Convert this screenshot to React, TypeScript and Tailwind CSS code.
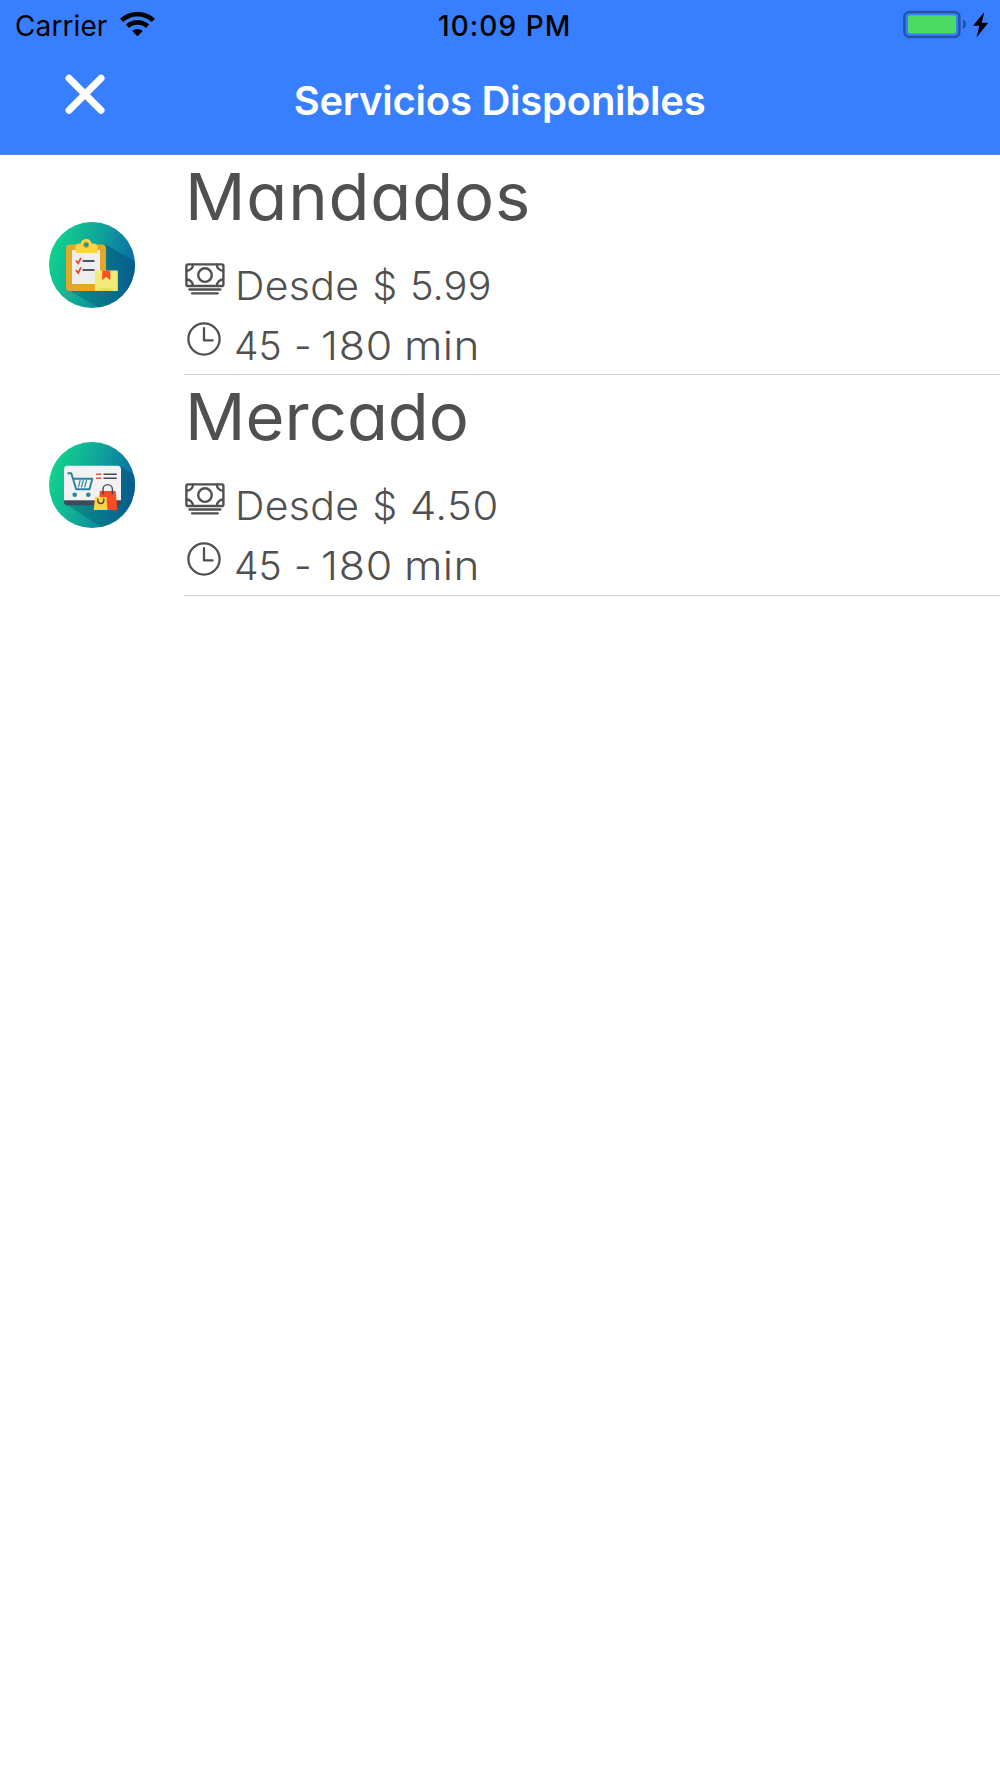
import type { ReactNode } from "react";

type Word = { text: string; className: string };
type Service = {
  name: string;
  nameClass: string;
  price: Word;
  icon: ReactNode;
};

function WifiIcon() {
  return (
    <svg className="ml-[13px] mt-[12px] h-[25px] w-[35px] shrink-0" viewBox="0 0 35 25">
      <path d="M1.6 8.6A23.5 23.5 0 0 1 33.4 8.6" fill="none" stroke="#000" strokeWidth="4.6" transform="translate(0 -.2)" />
      <path d="M7.4 14.3A15 15 0 0 1 27.6 14.3" fill="none" stroke="#000" strokeWidth="4.6" />
      <path d="M12.2 19.1A7.6 7.6 0 0 1 22.8 19.1L18.2 23.8Q17.5 24.4 16.8 23.8Z" fill="#000" />
    </svg>
  );
}

function BatteryIcon() {
  return (
    <svg className="h-[30px] w-[88px]" viewBox="0 0 88 30">
      <rect x="1.4" y="2" width="55" height="25" rx="5" fill="none" stroke="#2352a8" strokeWidth="2.4" />
      <rect x="5" y="5.2" width="48" height="18.2" rx="2.6" fill="#4cd964" />
      <path d="M60 9.6c4 1.6 4 8 0 9.6z" fill="#2352a8" />
      <path d="M81.4 2L70 15.8h6.4L73.6 27.4 85.2 12.8h-6.5z" fill="#000" />
    </svg>
  );
}

function CloseIcon() {
  return (
    <svg className="h-[40px] w-[40px]" viewBox="0 0 40 40">
      <path d="M4 4.2L36 36.2M36 4.2L4 36.2" stroke="#fff" strokeWidth="7" strokeLinecap="round" />
    </svg>
  );
}

function CashIcon() {
  return (
    <svg className="h-[32px] w-[40px]" viewBox="0 0 40 32" fill="none" stroke="#505050" strokeWidth="2" strokeLinecap="round" strokeLinejoin="round">
      <rect x="1.4" y="1.4" width="37" height="21.6" rx="1.6" strokeWidth="2.4" />
      <circle cx="20" cy="12.1" r="6.8" strokeWidth="2.4" />
      <path d="M8 1.6A6.4 6.4 0 0 1 1.6 7.8M31.8 1.6A6.4 6.4 0 0 0 38.2 7.8M8 22.8A6.4 6.4 0 0 0 1.6 16.5M31.8 22.8A6.4 6.4 0 0 1 38.2 16.5" strokeWidth="2.3" />
      <path d="M4.4 26.5H35.4M7 30.3H32.8" strokeWidth="2.3" />
    </svg>
  );
}

function ClockIcon() {
  return (
    <svg className="h-[34px] w-[34px]" viewBox="0 0 34 34" fill="none" stroke="#505050" strokeWidth="2.3">
      <circle cx="17" cy="17" r="15.6" />
      <path d="M17 6.2V18.4H25.6" strokeLinecap="round" strokeLinejoin="round" />
    </svg>
  );
}

function ErrandsIcon() {
  return (
    <svg className="h-[86px] w-[86px]" viewBox="0 0 86 86">
      <defs>
        <linearGradient id="errandsBase" x1="0" y1=".35" x2="1" y2=".65">
          <stop offset="0" stopColor="#10d58b" />
          <stop offset=".5" stopColor="#10a29a" />
          <stop offset="1" stopColor="#0865a7" />
        </linearGradient>
        <linearGradient id="errandsShade" x1="0" y1=".5" x2="1" y2=".5">
          <stop offset="0" stopColor="#0a9486" />
          <stop offset="1" stopColor="#07588e" />
        </linearGradient>
        <clipPath id="errandsClip"><circle cx="43" cy="43" r="43" /></clipPath>
      </defs>
      <g clipPath="url(#errandsClip)">
        <rect width="86" height="86" fill="url(#errandsBase)" />
        <path d="M17 67L54 88H90V42L56 22Z" fill="url(#errandsShade)" />
      </g>
      <rect x="17" y="22.5" width="40" height="46.5" rx="4" fill="#e2a829" />
      <path d="M23 28H51V62H23Z" fill="#eeeeef" />
      <path d="M26.5 31V25Q26.5 21.5 30 21.5H31.7A5.6 5.6 0 0 1 42.7 21.5H44.5Q48.5 21.5 48.5 25V31Z" fill="#ffd34a" />
      <circle cx="37.2" cy="22.7" r="2.6" fill="#12a18d" stroke="#d99d24" strokeWidth="1" />
      <path d="M27 38.5L29.2 41.3L32 35.8M27 48L29.2 51L32 45.3" fill="none" stroke="#ef4530" strokeWidth="1.8" />
      <path d="M33.6 39H45.5M33.6 48H45.5" stroke="#515366" strokeWidth="1.9" />
      <rect x="45.8" y="48.5" width="23" height="20.5" fill="#f1ea79" />
      <path d="M53.2 48.5H61.3V58.2L57.3 54.7L53.2 58.2Z" fill="#ff5023" />
      <path d="M46 68.6Q52 64.6 64 66.8V69H46Z" fill="#e8da68" />
    </svg>
  );
}

function MarketIcon() {
  return (
    <svg className="h-[86px] w-[86px]" viewBox="0 0 86 86">
      <defs>
        <linearGradient id="marketBase" x1="0" y1=".35" x2="1" y2=".65">
          <stop offset="0" stopColor="#10d58b" />
          <stop offset=".5" stopColor="#10a29a" />
          <stop offset="1" stopColor="#0865a7" />
        </linearGradient>
        <linearGradient id="marketShade" x1="0" y1=".5" x2="1" y2=".5">
          <stop offset="0" stopColor="#0a9486" />
          <stop offset="1" stopColor="#07588e" />
        </linearGradient>
        <clipPath id="marketClip"><circle cx="43" cy="43" r="43" /></clipPath>
        <clipPath id="marketCard"><rect x="15" y="23.5" width="57" height="40" rx="4" /></clipPath>
      </defs>
      <g clipPath="url(#marketClip)">
        <rect width="86" height="86" fill="url(#marketBase)" />
        <path d="M15 61L60 90H90V36L71.5 24Z" fill="url(#marketShade)" />
      </g>
      <g clipPath="url(#marketCard)">
        <rect x="15" y="23.5" width="57" height="35" fill="#f2f2f3" />
        <rect x="15" y="58.5" width="57" height="5" fill="#44465a" />
      </g>
      <path d="M18.5 31.2H22.3L27.2 47.2H40.5L43.3 36.7H24.2" fill="none" stroke="#2b829f" strokeWidth="1.9" strokeLinejoin="round" />
      <path d="M31.2 38.2L29.4 45.4M34.4 38.2L32.4 45.4M37.6 38.2L35.6 45.4" stroke="#2b829f" strokeWidth="1.2" />
      <circle cx="25.7" cy="52.8" r="2.3" fill="#2b829f" />
      <circle cx="39.3" cy="52.8" r="2.3" fill="#2b829f" />
      <path d="M47 32.2H52.4M47 36.2H52.4" stroke="#ef5040" strokeWidth="1.6" />
      <path d="M54.5 32.2H67.8M54.5 36.2H67.8" stroke="#44465a" strokeWidth="1.6" />
      <path d="M50.8 49H66.6L68.5 68H49.5Z" fill="#fb4b22" />
      <path d="M54 52.5V47.3A4.7 4.7 0 0 1 63.4 47.3V52.5" fill="none" stroke="#44465a" strokeWidth="1.4" />
      <path d="M46 55H57.5L58.5 68H44.8Z" fill="#ffd33f" />
      <path d="M48.8 56.5V58.5A3 3 0 0 0 54.8 58.5V56.5" fill="none" stroke="#44465a" strokeWidth="1.4" />
    </svg>
  );
}

const services: Service[] = [
  {
    name: "Mandados",
    nameClass: "scale-x-[1.03] tracking-[0.8px]",
    price: { text: "5.99", className: "scale-x-[1.02]" },
    icon: <ErrandsIcon />,
  },
  {
    name: "Mercado",
    nameClass: "scale-x-[1.03]",
    price: { text: "4.50", className: "scale-x-[1.07] tracking-[0.5px]" },
    icon: <MarketIcon />,
  },
];

function Words({ words }: { words: Word[] }) {
  return (
    <div className="flex">
      {words.map((w) => (
        <span key={w.text} className={`shrink-0 origin-left ${w.className}`}>{w.text}</span>
      ))}
    </div>
  );
}

function ServiceRow({ service }: { service: Service }) {
  return (
    <li className="flex h-[220px] last:h-[221px]">
      <div className="w-[184px] shrink-0 pl-[48.5px] pt-[67px]">{service.icon}</div>
      <div className="grow overflow-hidden border-b border-[#d2d2d2] text-[#505050]">
        <h2 className={`h-[83px] origin-left pl-px text-[65px] leading-[83px] font-normal ${service.nameClass}`}>{service.name}</h2>
        <div className="mt-[17px] flex h-[60px] text-[39px] leading-[62px] font-[340]">
          <div className="w-[51px] shrink-0 pt-[8px] pl-[0.5px]"><CashIcon /></div>
          <Words words={[
            { text: "Desde", className: "w-[137.5px] scale-x-[1.05] tracking-[0.3px]" },
            { text: "$", className: "w-[37.5px]" },
            service.price,
          ]} />
        </div>
        <div className="flex h-[60px] text-[39px] leading-[61.6px] font-[340]">
          <div className="w-[50px] shrink-0 pt-[7px] pl-[3px]"><ClockIcon /></div>
          <Words words={[
            { text: "45", className: "w-[60px]" },
            { text: "-", className: "w-[27px]" },
            { text: "180", className: "w-[83px] scale-x-[1.1] tracking-[0.8px]" },
            { text: "min", className: "scale-x-[1.13] tracking-[0.3px]" },
          ]} />
        </div>
      </div>
    </li>
  );
}

export default function App() {
  return (
    <div className="h-[1778px] w-[1000px] overflow-hidden bg-white font-['Inter',sans-serif]">
      <header className="h-[155px] border-b border-[#5286de] bg-[#387fff]">
        <div className="grid h-[50px] grid-cols-[438px_1fr_auto] text-[28px] leading-[52px] text-black">
          <div className="flex pl-[15px]">
            <span className="tracking-[0.1px]">Carrier</span>
            <WifiIcon />
          </div>
          <span className="font-[550] tracking-[1.05px]">10:09 PM</span>
          <div className="pt-[10px] pr-[9px]"><BatteryIcon /></div>
        </div>
        <div className="flex h-[104px]">
          <button className="ml-[64.7px] mt-[24.4px] h-[40px] w-[40px]" aria-label="Cerrar"><CloseIcon /></button>
          <h1 className="ml-[189px] text-[40px] leading-[101px] font-semibold tracking-[-0.25px] whitespace-nowrap text-white">Servicios Disponibles</h1>
        </div>
      </header>
      <ul className="[font-feature-settings:'cv11']">
        {services.map((s) => <ServiceRow key={s.name} service={s} />)}
      </ul>
    </div>
  );
}
